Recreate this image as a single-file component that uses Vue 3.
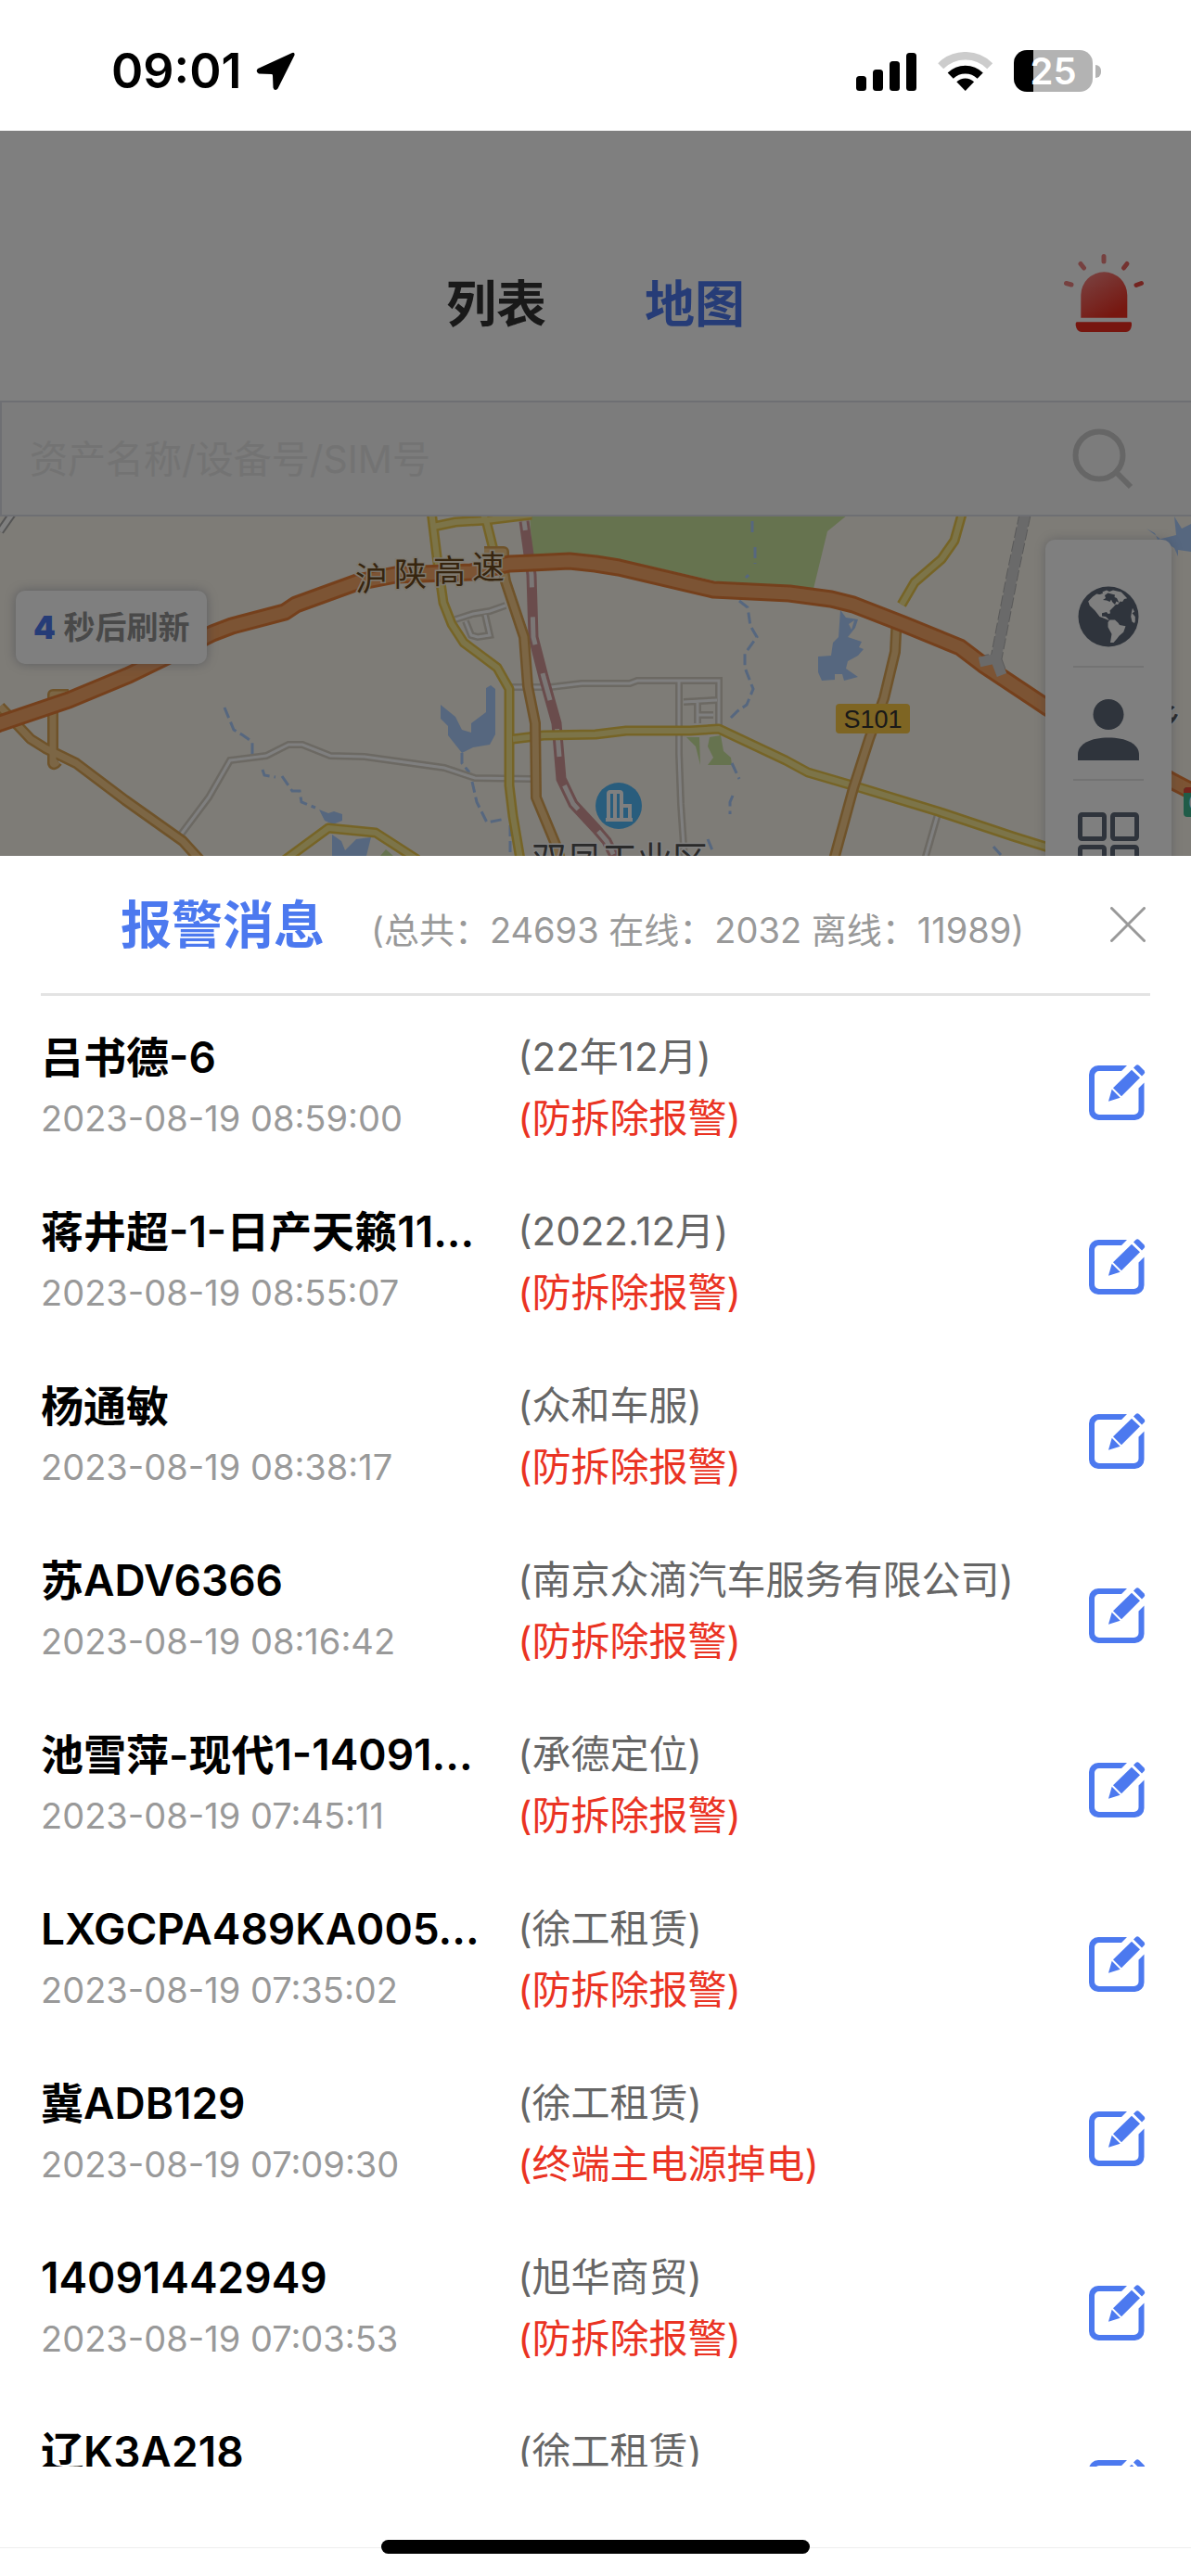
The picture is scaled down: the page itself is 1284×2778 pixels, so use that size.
<template>
  <div class="page">
    <div class="status-bar">
      <div class="status-left">
        <span class="time">09:01</span>
        <svg class="arrow" viewBox="0 0 42 42">
          <path d="M39 1L2 18Q-1 21 3 23.500L17 24Q18 24 18 25.500L18.500 38.500Q20 43 23.500 39.500L41.500 3.500Q42 0 39 1Z" />
        </svg>
      </div>
      <div class="status-right">
        <svg class="signal" viewBox="0 0 66 42">
          <rect x="0" y="26" width="11" height="16" rx="3.500" />
          <rect x="18" y="19" width="11" height="23" rx="3.500" />
          <rect x="36" y="10" width="11" height="32" rx="3.500" />
          <rect x="54" y="1" width="11" height="41" rx="3.500" />
        </svg>
        <svg class="wifi" viewBox="0 0 60 42">
          <path d="M3.200 15.200A37.500 37.500 0 0 1 56.200 15.200" fill="none" stroke="#ccc" stroke-width="8.500" />
          <path d="M13.700 25.700A22.700 22.700 0 0 1 45.700 25.700" fill="none" stroke="#000" stroke-width="8.700" />
          <path d="M29.700 42L20.300 32.300A13.300 13.300 0 0 1 39.100 32.300Z" />
        </svg>
        <div class="battery">
          <div class="battery-body">25</div>
          <div class="battery-nub"></div>
        </div>
      </div>
    </div>

    <div class="main">
      <header class="header">
        <nav class="tabs">
          <button
            v-for="tab in tabs"
            :key="tab"
            :class="{ active: tab === activeTab }"
            @click="activeTab = tab"
          >
            {{ tab }}
          </button>
        </nav>
        <button class="siren" aria-label="报警消息" @click="showAlarm = true">
          <svg viewBox="0 0 86 84">
            <defs>
              <linearGradient id="sirenFill" x1="0" y1="0" x2="0.600" y2="1">
                <stop offset="0" stop-color="#f48a88" />
                <stop offset="1" stop-color="#ee2e20" />
              </linearGradient>
            </defs>
            <path d="M18.300 68.700V44.300a25 25 0 0 1 50 0V68.700Z" fill="url(#sirenFill)" />
            <path d="M14 73.300H72Q73 73.300 73 75V77Q72 84 67 84H19Q14 84 12.700 77V75Q12.700 73.300 14 73.300Z" fill="#ee2c1e" />
            <g fill="none" stroke-width="5" stroke-linecap="round">
              <path d="M43 2.500V8M18 10.500L21.500 15M2.500 31.500L8 33" stroke="#ec8280" />
              <path d="M68 10.500L64.500 15" stroke="#e86460" />
              <path d="M78 33.500L83.500 31.500" stroke="#e84840" />
            </g>
          </svg>
        </button>
      </header>

      <label class="search">
        <input v-model="keyword" type="text" placeholder="资产名称/设备号/SIM号" />
        <svg viewBox="0 0 66 66" fill="none" stroke="#ccc" stroke-width="6">
          <circle cx="29" cy="29" r="25.500" />
          <path d="M47 47L63 63" />
        </svg>
      </label>

      <div class="map">
        <svg class="map-canvas" viewBox="0 2 1284 366">
          <rect width="1284" height="368" fill="#fcf8ee" />

          <!-- green areas -->
          <g fill="#cce69e">
            <path d="M571 0H914L892 18L877 80L773 72L667 48L574 45Z" />
            <path d="M740 240L754 240L755 270L750 250ZM765 240L777 238L780 255L788 262L789 270H763L769 262L763 250ZM410 368L416 361L424 368Z" />
          </g>

          <!-- water -->
          <g fill="#accefe">
            <path d="M475 205L491 218L498 232L508 235V225L524 213V187L529 184L534 188V237L528 248L510 251L498 257L483 238V228L475 220Z" />
            <path fill-rule="evenodd" d="M906 103L912 111L925 113L922 122L914 132L929 137L926 143L931 145L925 152L914 158L912 166L925 175L910 179L908 172H900V178L886 179L882 170V153L896 152L898 138L904 132ZM915 118L921 114L918 124Z" />
            <path d="M1236 15L1245 20L1248 27L1268 22L1266 2L1274 15L1284 10V40L1270 38V45L1266 36L1256 30Z" />
            <path d="M344 318L354 322L360 320L369 323V330L359 334L350 330ZM358 345L368 352L372 362L384 350L400 348L395 368H358Z" />
          </g>
          <g fill="none" stroke="#accefe" stroke-width="3" stroke-dasharray="12 5">
            <path d="M242 208L252 232L262 238L272 245V258" />
            <path d="M283 275L285 281L297 283M304 282L315 298H323L325 310L340 316" />
            <path d="M498 257V268L506 278M509 288L514 310L525 332L545 328M550 335V368" />
            <path d="M811 7V20M814 35V53M807 65L804 68M797 93L806 100L809 120L816 132L803 150V165L812 188L805 205L795 212L785 222" />
            <path d="M789 268L797 285M790 303L787 310V323M763 350L768 362M1071 358L1080 368" />
          </g>

          <!-- minor roads -->
          <g fill="none" stroke="#d8d2c6" stroke-width="8">
            <path v-for="d in minorRoads" :key="d" :d="d" />
          </g>
          <g fill="none" stroke="#fff" stroke-width="3">
            <path v-for="d in minorRoads" :key="d" :d="d" />
          </g>

          <!-- railways -->
          <path d="M1105 0L1092 62L1074 155L1056 159M1074 157L1080 173" fill="none" stroke="#b4b4b4" stroke-width="13" stroke-dasharray="12 3" />
          <path d="M14 -2L0 18" fill="none" stroke="#aaa" stroke-width="9" />
          <path d="M14 -2L0 18" fill="none" stroke="#fff" stroke-width="5" />
          <path :d="railway" fill="none" stroke="#d49898" stroke-width="11" />
          <path :d="railway" fill="none" stroke="#f6efec" stroke-width="5" stroke-dasharray="30 32" stroke-dashoffset="-42" />

          <!-- yellow roads -->
          <g fill="none" stroke="#ecc84c" stroke-width="11" stroke-linejoin="round">
            <path v-for="d in yellowRoads" :key="d" :d="d" />
          </g>
          <g fill="none" stroke="#f8e892" stroke-width="6" stroke-linejoin="round">
            <path v-for="d in yellowRoads" :key="d" :d="d" />
          </g>

          <!-- provincial roads -->
          <g fill="none" stroke="#dea654" stroke-width="12" stroke-linejoin="round">
            <path v-for="d in tanRoads" :key="d" :d="d" />
          </g>
          <g fill="none" stroke="#f8cc8a" stroke-width="7" stroke-linejoin="round">
            <path v-for="d in tanRoads" :key="d" :d="d" />
          </g>

          <!-- expressway -->
          <path :d="expressway" fill="none" stroke="#ea8038" stroke-width="19" stroke-linejoin="round" />
          <path :d="expressway" fill="none" stroke="#f8a868" stroke-width="13" stroke-linejoin="round" />
          <path d="M1105 0L1092 62L1074 155L1056 159M1074 157L1080 173" fill="none" stroke="#d4d4d4" stroke-width="11" />

          <rect x="901" y="204" width="80" height="32" rx="4" fill="#fcca46" />
          <text x="941" y="230" class="road-no" text-anchor="middle">S101</text>

          <rect x="1276" y="294" width="16" height="32" rx="4" fill="#40b890" />
          <path d="M1276 300V298Q1276 294 1280 294H1284V300Z" fill="#e84838" />
          <text x="1281" y="320" class="road-no sign">G</text>

          <circle cx="667" cy="314" r="25" fill="#52bafa" />
          <path d="M656 329V301Q656 299 658 299H668Q670 299 670 301V329M663 301V329M670 314H679V329M653 329H682" fill="none" stroke="#fff" stroke-width="4" />

          <g class="road-name">
            <text x="383" y="82">沪</text>
            <text x="425" y="77">陕</text>
            <text x="467" y="74">高</text>
            <text x="509" y="69">速</text>
          </g>
          <g class="place-name">
            <text x="573" y="385">双凤工业区</text>
            <text x="1236" y="232">乡</text>
          </g>
        </svg>

        <div class="refresh"><b>{{ seconds }}</b> 秒后刷新</div>

        <div class="tools">
          <button aria-label="地图类型">
            <svg viewBox="0 0 66 66">
              <circle cx="33" cy="33" r="32.500" fill="#5e6878" />
              <g fill="#fff">
                <path d="M11.200 16.500L16 11.500L20.200 8.500L24 9L26 6.500L31 4.500L34 6L38 4.500L46.800 6.500L53.200 13.200L50 14L48 17L45.800 16.500L43 20L41 19.800L38.500 22.500L34.500 26.500L35 29.500L32.500 30L31 28L26 29.200V32.500L30 33L32.500 35.200L33.800 37.200L30 35.500L23.500 33L18.500 26.500L12.800 21Z" />
                <path d="M34.500 36.500L40 36.500L43.500 39.800L45 42L51.500 43.200L49.200 49.800L44.500 53.800L42 57L38.500 61H35L36.500 51.800L32.500 44.200V39Z" />
                <path d="M59 23.800L61 27.800L58.500 29.200L61.800 33V38L61 40L58.500 38.500L57.200 33L58 28Z" />
              </g>
              <path d="M27 15L30 13L29 10L32.500 7.500L40 9.500L39.500 12L42 13L44.500 18L41.500 16.500L40 20L37 17L36 14.500L34.500 17L31 15.500ZM20 7L26 5L27 8L23 9Z" fill="#5e6878" />
            </svg>
          </button>
          <button aria-label="用户">
            <svg viewBox="0 0 66 66" fill="#5e6878">
              <circle cx="33" cy="16.500" r="16.500" />
              <path d="M0 66V60C0 48 14 41.500 33 41.500S66 48 66 60V66Z" />
            </svg>
          </button>
          <button aria-label="分组">
            <svg viewBox="0 0 66 66" fill="none" stroke="#5e6878" stroke-width="5">
              <rect x="2.500" y="2.500" width="26" height="26" rx="2" />
              <rect x="37.500" y="2.500" width="26" height="26" rx="2" />
              <rect x="2.500" y="37.500" width="26" height="26" rx="2" />
              <rect x="37.500" y="37.500" width="26" height="26" rx="2" />
            </svg>
          </button>
        </div>
      </div>

      <div class="mask" v-if="showAlarm"></div>
    </div>

    <section class="sheet" v-if="showAlarm">
      <div class="sheet-head">
        <h2>报警消息</h2>
        <p>(总共：24693 在线：2032 离线：11989)</p>
        <button class="close" aria-label="关闭" @click="showAlarm = false">
          <svg viewBox="0 0 38 38" fill="none" stroke="#999" stroke-width="3" stroke-linecap="round">
            <path d="M1.500 1.500L36.500 36.500M36.500 1.500L1.500 36.500" />
          </svg>
        </button>
      </div>
      <ul class="list">
        <li v-for="item in alarms" :key="item.name">
          <div class="asset">
            <strong>{{ item.name }}</strong>
            <time>{{ item.time }}</time>
          </div>
          <div class="detail">
            <span class="group">({{ item.group }})</span>
            <span v-if="item.type" class="type">({{ item.type }})</span>
          </div>
          <button class="edit" aria-label="处理">
            <svg viewBox="0 0 66 70" fill="#4c79ef">
              <path d="M41 11H10A10 10 0 0 0 0 21V60A10 10 0 0 0 10 70H49.500A10 10 0 0 0 59.500 60V29.500L53.500 35.500V59A5 5 0 0 1 48.500 64H11A5 5 0 0 1 6 59V22A5 5 0 0 1 11 17H35Z" />
              <path d="M26 35.300L46 15.700L55 24.300L35 44.300Z" />
              <path d="M48 13.500L50.500 11Q52 9.500 54 11L59.500 16.500Q61 18.500 59.500 20L57 22.500Z" />
              <path d="M21 49.700L24.700 36.700L33.700 45.700Z" />
            </svg>
          </button>
        </li>
      </ul>
      <div class="home-area">
        <div class="home-bar"></div>
      </div>
    </section>
  </div>
</template>

<script setup>
import { ref } from 'vue'

const tabs = ['列表', '地图']
const activeTab = ref('地图')
const keyword = ref('')
const seconds = ref(4)
const showAlarm = ref(true)

const alarms = [
  { name: '吕书德-6', time: '2023-08-19 08:59:00', group: '22年12月', type: '防拆除报警' },
  { name: '蒋井超-1-日产天籁11...', time: '2023-08-19 08:55:07', group: '2022.12月', type: '防拆除报警' },
  { name: '杨通敏', time: '2023-08-19 08:38:17', group: '众和车服', type: '防拆除报警' },
  { name: '苏ADV6366', time: '2023-08-19 08:16:42', group: '南京众滴汽车服务有限公司', type: '防拆除报警' },
  { name: '池雪萍-现代1-14091...', time: '2023-08-19 07:45:11', group: '承德定位', type: '防拆除报警' },
  { name: 'LXGCPA489KA005...', time: '2023-08-19 07:35:02', group: '徐工租赁', type: '防拆除报警' },
  { name: '冀ADB129', time: '2023-08-19 07:09:30', group: '徐工租赁', type: '终端主电源掉电' },
  { name: '14091442949', time: '2023-08-19 07:03:53', group: '旭华商贸', type: '防拆除报警' },
  { name: '辽K3A218', time: '', group: '徐工租赁', type: '' },
]

const expressway =
  'M-5 227L0 225L74 200L139 173L176 155L229 128L250 120L307 105L319 97L385 73L426 65L508 62L549 53L573 52L614 50L642 53L667 57L769 81L851 85L896 91L920 97L974 118L1035 143L1060 162L1129 208L1263 287L1290 301'

const railway =
  'M565 7L573 65L575 132L586 175L600 225L605 285L618 312L642 338L654 352L663 370'

const yellowRoads = [
  'M467 13L491 8L524 6L573 0',
  'M465 -4L471 45L478 95L487 118L500 138L536 165L549 188V292L553 325L561 372',
  'M518 -8L525 10L532 38',
  'M553 242L586 238L642 237L675 233H744L775 231L847 265L871 278L929 295L1011 320L1092 347L1140 362',
  'M305 374L354 338L405 343L450 372',
  'M1038 -4L1029 28L1015 48L986 73L972 97',
]

const tanRoads = [
  'M0 207L33 242L49 252L82 268L135 308L197 352L217 374',
  'M74 194H57V268Q58 271 62 266',
  'M522 40H543V60L545 72L565 132L569 185L577 225L578 305L600 358L604 372',
  'M967 108L965 148L953 198L937 242L920 295L899 372',
]

const minorRoads = [
  'M195 345L225 305L248 265L287 260L311 248H326L356 260L393 261L479 273L512 284L573 285',
  'M551 186H594L627 182H679L687 179H775V228',
  'M491 113L510 107L528 104L545 98M502 115L508 130L515 132L528 130L523 108',
  'M732 179V258L734 312L738 372',
  'M737 202L773 200M752 202V225M753 216H769',
  'M1011 323L997 372',
]
</script>

<style>
body {
  margin: 0;
  background: #fff;
}
</style>

<style scoped>
.page {
  display: flex;
  flex-direction: column;
  height: 100vh;
  overflow: hidden;
  background: #fff;
  font-family: Inter, "Noto Sans CJK SC", sans-serif;
}

button {
  border: none;
  background: none;
  padding: 0;
  font-family: inherit;
  cursor: pointer;
}

svg {
  display: block;
}

.status-bar {
  flex: none;
  display: flex;
  justify-content: space-between;
  align-items: center;
  height: 141px;
  padding: 12px 97px 0 120px;
  box-sizing: border-box;
}

.status-left {
  display: flex;
  align-items: center;
  gap: 16px;
}

.time {
  font-size: 52px;
  font-weight: 600;
}

.arrow {
  width: 42px;
}

.status-right {
  display: flex;
  align-items: center;
  gap: 22px;
}

.signal {
  width: 66px;
}

.wifi {
  width: 60px;
}

.battery {
  display: flex;
  align-items: center;
  gap: 3px;
}

.battery-body {
  width: 85px;
  height: 45px;
  border-radius: 14px;
  background: linear-gradient(90deg, #000 25%, #b3b3b3 25%);
  color: #fff;
  font-size: 40px;
  font-weight: 600;
  line-height: 45px;
  text-align: center;
}

.battery-nub {
  width: 6px;
  height: 14px;
  border-radius: 0 7px 7px 0;
  background: #b3b3b3;
}

.main {
  flex: none;
  position: relative;
  background: #fff;
}

.mask {
  position: absolute;
  inset: 0;
  background: rgba(0, 0, 0, 0.5);
}

.header {
  display: grid;
  grid-template-columns: 1fr auto 1fr;
  align-items: center;
  height: 291px;
  padding: 79px 51px 0;
  box-sizing: border-box;
}

.tabs {
  grid-column: 2;
  display: flex;
  gap: 106px;
  padding-bottom: 4px;
}

.tabs button {
  font-size: 54px;
  font-weight: 600;
  color: #333;
}

.tabs .active {
  color: #4c79ef;
}

.siren {
  justify-self: end;
  padding-bottom: 20px;
}

.siren svg {
  width: 86px;
}

.search {
  display: flex;
  align-items: center;
  height: 125px;
  padding: 0 62px 0 30px;
  box-sizing: border-box;
  border: 2px solid #dcdfe6;
  border-right: none;
  background: #f8f8f8;
}

.search input {
  flex: 1;
  min-width: 0;
  border: none;
  outline: none;
  padding: 0;
  background: none;
  font-family: inherit;
  font-size: 41px;
}

.search input::placeholder {
  color: #e6e6e6;
}

.search svg {
  width: 66px;
}

.map {
  position: relative;
  height: 366px;
  overflow: hidden;
}

.map-canvas {
  width: 100%;
}

.road-no {
  font-family: "Liberation Sans", sans-serif;
  font-size: 27px;
  fill: #333;
}

.sign {
  fill: #fff;
}

.road-name {
  font-size: 35px;
  fill: #6e4a1c;
  stroke: #fbf1dc;
  stroke-width: 3px;
  paint-order: stroke;
}

.place-name {
  font-size: 38px;
  fill: #555;
  stroke: #fff;
  stroke-width: 3px;
  paint-order: stroke;
}

.refresh {
  position: absolute;
  left: 17px;
  top: 80px;
  padding: 0 19px;
  border-radius: 10px;
  background: #fff;
  box-shadow: 0 0 12px rgba(80, 90, 120, 0.4);
  color: #929292;
  font-size: 34px;
  font-weight: 600;
  line-height: 79px;
}

.refresh b {
  color: #4c79ef;
}

.tools {
  position: absolute;
  top: 25px;
  right: 21px;
  display: flex;
  flex-direction: column;
  padding: 16px 30px;
  border-radius: 10px;
  background: #fff;
  box-shadow: 0 0 12px rgba(80, 90, 120, 0.3);
}

.tools button {
  padding: 34px 5px 20px;
  border-bottom: 2px solid #e6e6e6;
}

.tools svg {
  width: 66px;
}

.sheet {
  flex: 1;
  min-height: 0;
  display: flex;
  flex-direction: column;
  background: #fff;
}

.sheet-head {
  display: flex;
  align-items: baseline;
  height: 148px;
  margin: 0 44px;
  padding-left: 86px;
  border-bottom: 3px solid #e3e3e3;
}

.sheet-head h2 {
  margin: 0;
  color: #4c79ef;
  font-size: 55px;
  font-weight: 600;
  line-height: 148px;
}

.sheet-head p {
  flex: 1;
  margin: 0 0 0 50px;
  color: #999;
  font-size: 38px;
  white-space: nowrap;
}

.close {
  align-self: center;
  padding: 0 5px;
}

.close svg {
  width: 38px;
}

.list {
  flex: 1;
  min-height: 0;
  margin: 0;
  padding: 5px 44px 0;
  overflow: hidden;
  list-style: none;
}

.list li {
  display: flex;
  align-items: center;
  height: 188px;
}

.asset,
.detail {
  display: flex;
  flex-direction: column;
  line-height: 66px;
  white-space: nowrap;
}

.asset {
  width: 43%;
}

.asset strong {
  font-size: 46px;
  font-weight: 600;
}

.asset time {
  min-height: 66px;
  color: #999;
  font-size: 38px;
}

.detail {
  flex: 1;
  min-height: 132px;
  font-size: 42px;
}

.group {
  color: #666;
}

.type {
  color: #ea3323;
}

.edit svg {
  width: 66px;
}

.home-area {
  flex: none;
  display: flex;
  flex-direction: column;
  justify-content: flex-end;
  align-items: center;
  height: 118px;
  padding-bottom: 24px;
  box-sizing: border-box;
  background: linear-gradient(#eee, #eee) 0 87px / 100% 1px no-repeat;
}

.home-bar {
  width: 36%;
  height: 15px;
  border-radius: 8px;
  background: #000;
}
</style>
